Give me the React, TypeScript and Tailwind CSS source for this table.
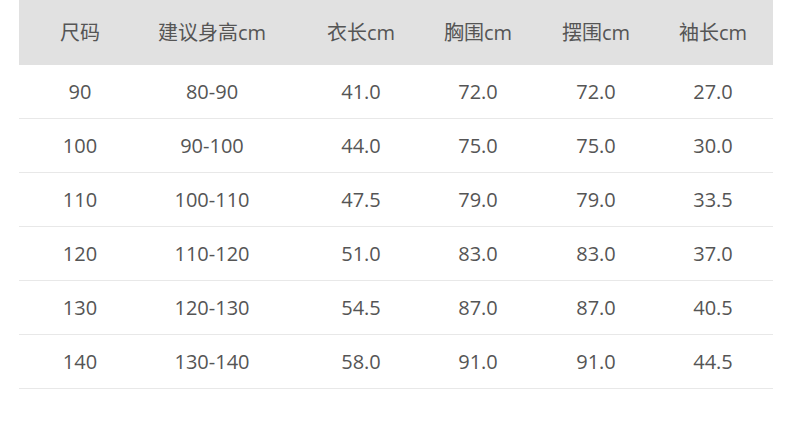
import React from 'react';

const headers = ['尺码', '建议身高cm', '衣长cm', '胸围cm', '摆围cm', '袖长cm'];

const rows: string[][] = [
  ['90', '80-90', '41.0', '72.0', '72.0', '27.0'],
  ['100', '90-100', '44.0', '75.0', '75.0', '30.0'],
  ['110', '100-110', '47.5', '79.0', '79.0', '33.5'],
  ['120', '110-120', '51.0', '83.0', '83.0', '37.0'],
  ['130', '120-130', '54.5', '87.0', '87.0', '40.5'],
  ['140', '130-140', '58.0', '91.0', '91.0', '44.5'],
];

const cols = 'grid grid-cols-[122px_142px_156px_78px_158px_76px]';

const App: React.FC = () => {
  return (
    <div
      className="h-[431px] w-[790px] bg-white text-[20px] text-[#555]"
      style={{ fontFamily: '"Open Sans", "Noto Sans CJK SC", sans-serif' }}
    >
      <div className="ml-[19px] w-[754px]">
        <div className={`${cols} h-[65px] items-center bg-[#e1e1e1]`}>
          {headers.map((h) => (
            <div key={h} className="text-center leading-none">{h}</div>
          ))}
        </div>
        {rows.map((row) => (
          <div key={row[0]} className={`${cols} h-[54px] items-center border-b border-[#e8e8e8]`}>
            {row.map((cell, i) => (
              <div key={i} className="text-center leading-none">{cell}</div>
            ))}
          </div>
        ))}
      </div>
    </div>
  );
};

export default App;
